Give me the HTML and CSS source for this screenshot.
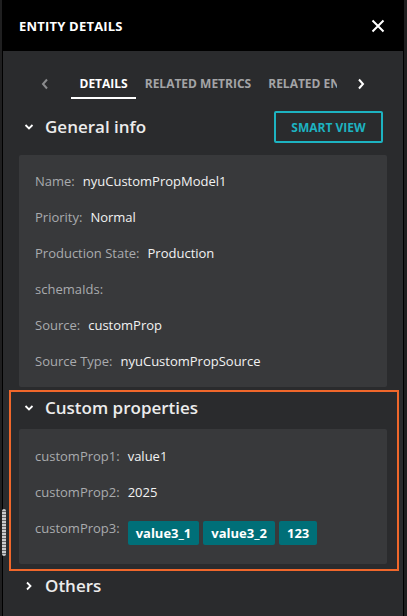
FILE: index.html
```html
<!doctype html>
<html>

<head>
    <title>Entity details</title>
    <link rel="stylesheet" href="styles.css">
</head>

<body>
    <div class="panel">
        <div class="header">
            <div class="title">Entity Details</div>
            <button class="close" aria-label="close">
                <svg width="14" height="14" viewBox="0 0 14 14">
                    <path d="M1.5 1.5 L12.5 12.5 M12.5 1.5 L1.5 12.5" stroke="#fff" stroke-width="2" fill="none" />
                </svg>
            </button>
        </div>

        <div class="tabs">
            <button class="tab-arrow left">
                <svg width="8" height="12" viewBox="0 0 8 12">
                    <path d="M6 1.5 L2 6 L6 10.5" stroke="#8a8b8d" stroke-width="2" fill="none" />
                </svg>
            </button>
            <div class="tab-viewport">
                <div class="tab active">Details</div>
                <div class="tab">Related Metrics</div>
                <div class="tab">Related Entities</div>
            </div>
            <button class="tab-arrow right">
                <svg width="8" height="12" viewBox="0 0 8 12">
                    <path d="M2 1.5 L6 6 L2 10.5" stroke="#fff" stroke-width="2" fill="none" />
                </svg>
            </button>
        </div>

        <div class="section">
            <div class="section-head with-action">
                <svg class="chev" width="10" height="8" viewBox="0 0 10 8">
                    <path d="M1.5 2 L5 5.5 L8.5 2" stroke="#fff" stroke-width="1.8" fill="none" />
                </svg>
                <div class="section-title">General info</div>
                <button class="smart-view">Smart View</button>
            </div>
            <div class="card">
                <div class="row"><span class="label">Name:</span><span class="value">nyuCustomPropModel1</span></div>
                <div class="row"><span class="label">Priority:</span><span class="value">Normal</span></div>
                <div class="row"><span class="label">Production State:</span><span class="value">Production</span></div>
                <div class="row"><span class="label">schemaIds:</span><span class="value"></span></div>
                <div class="row"><span class="label">Source:</span><span class="value">customProp</span></div>
                <div class="row"><span class="label">Source Type:</span><span class="value">nyuCustomPropSource</span></div>
            </div>
        </div>

        <div class="section highlight">
            <div class="section-head">
                <svg class="chev" width="10" height="8" viewBox="0 0 10 8">
                    <path d="M1.5 2 L5 5.5 L8.5 2" stroke="#fff" stroke-width="1.8" fill="none" />
                </svg>
                <div class="section-title">Custom properties</div>
            </div>
            <div class="card custom">
                <div class="row"><span class="label">customProp1:</span><span class="value">value1</span></div>
                <div class="row"><span class="label">customProp2:</span><span class="value">2025</span></div>
                <div class="row">
                    <span class="label">customProp3:</span>
                    <span class="tags">
                        <span class="tag">value3_1</span>
                        <span class="tag">value3_2</span>
                        <span class="tag">123</span>
                    </span>
                </div>
            </div>
        </div>

        <div class="section">
            <div class="section-head collapsed">
                <svg class="chev" width="10" height="10" viewBox="0 0 10 10">
                    <path d="M3 1.5 L6.5 5 L3 8.5" stroke="#fff" stroke-width="1.8" fill="none" />
                </svg>
                <div class="section-title">Others</div>
            </div>
        </div>

        <div class="resize-handle"></div>
    </div>
</body>

</html>
```

FILE: styles.css
```css
html,
body {
    margin: 0;
    padding: 0;
    height: 100%;
    overflow: hidden;
    background: #1f1f20;
}

* {
    box-sizing: border-box;
}

button {
    background: none;
    border: 0;
    padding: 0;
    cursor: pointer;
    font-family: inherit;
}

.panel {
    position: relative;
    width: 402px;
    height: 100%;
    margin-left: 2px;
    border-left: 1px solid #000;
    border-right: 1px solid #000;
    background: #2a2b2d;
    font-family: "Open Sans", "Noto Sans", sans-serif;
    color: #f2f2f2;
}

.header {
    display: flex;
    align-items: center;
    justify-content: space-between;
    height: 51px;
    padding: 0 16px 0 16px;
    background: #000;
}

.title {
    font-size: 13px;
    font-weight: 700;
    text-transform: uppercase;
    letter-spacing: 0.2px;
    color: #fff;
}

.close {
    display: flex;
    width: 14px;
    height: 14px;
    margin-right: 2px;
}

/* tabs */

.tabs {
    display: flex;
    align-items: flex-start;
    padding-top: 17px;
}

.tab-arrow {
    display: flex;
    align-items: center;
    justify-content: center;
    height: 31px;
}

.tab-arrow.left {
    width: 32px;
    margin-left: 26px;
    margin-right: 10px;
}

.tab-arrow.right {
    width: 48px;
}

.tab-viewport {
    display: flex;
    width: 266px;
    overflow: hidden;
    white-space: nowrap;
}

.tab {
    padding: 8px 8.5px 6px;
    line-height: 15px;
    font-size: 12px;
    font-weight: 700;
    text-transform: uppercase;
    color: #a3a4a6;
    border-bottom: 2px solid transparent;
}

.tab.active {
    color: #fff;
    border-bottom-color: #fff;
}

/* sections */

.section {
    position: relative;
}

.section-head {
    display: flex;
    align-items: center;
    height: 26px;
    margin: 8px 0 8px;
    padding: 0 20px 0 21px;
}

.section-head.with-action {
    height: 32px;
    margin: 12px 0 12px;
}

.section-head.collapsed {
    margin-top: 9px;
}

.chev {
    flex: none;
    margin-right: 11px;
}

.section-title {
    flex: 1;
    padding-bottom: 2px;
    font-size: 17px;
    font-weight: 600;
    color: #ececec;
}

.smart-view {
    width: 109px;
    height: 32px;
    border: 2px solid #1db3c1;
    border-radius: 2px;
    font-size: 12px;
    font-weight: 700;
    text-transform: uppercase;
    color: #1db3c1;
}

.card {
    margin: 0 16px;
    padding: 8px 16px;
    background: #38393b;
    border-radius: 2px;
}

.card.custom {
    padding: 9px 16px 10px;
}

.row {
    display: flex;
    align-items: flex-start;
    padding: 9px 0;
    font-size: 13px;
    line-height: 18px;
}

.label {
    margin-right: 8px;
    color: #a9abae;
}

.value {
    color: #f2f2f2;
}

.tags {
    display: flex;
    gap: 4px;
    margin-top: 2px;
}

.tag {
    padding: 3px 8px;
    background: #006f78;
    border-radius: 2px;
    font-weight: 700;
    color: #fff;
}

.highlight::after {
    content: "";
    position: absolute;
    top: -5px;
    bottom: -7px;
    left: 6px;
    right: 4px;
    border: 2px solid #f0672b;
    pointer-events: none;
}

.resize-handle {
    position: absolute;
    left: -1px;
    top: 509px;
    width: 4px;
    height: 47px;
    border-radius: 2px;
    background: repeating-linear-gradient(#c9cacc 0 2px, #6a6b6d 2px 3px);
}
```
